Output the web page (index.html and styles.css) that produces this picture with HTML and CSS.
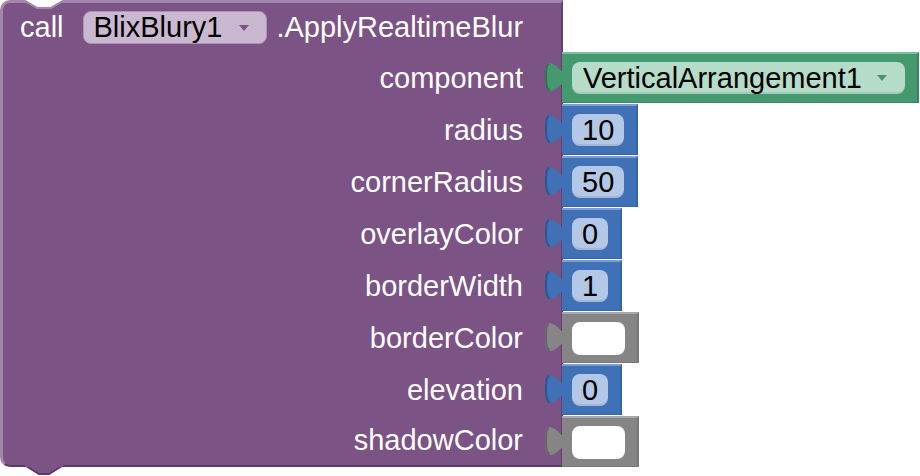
FILE: index.html
```html
<!DOCTYPE html>
<html>
<head>
  <title>ApplyRealtimeBlur block</title>
  <link rel="stylesheet" href="styles.css">
</head>
<body>
  <div class="block">
    <!-- top notch and bottom tab of the statement block -->
    <svg class="notch" width="40" height="9" viewBox="0 0 40 9">
      <path d="M0,0 L12,7 L26,7 L38,0 Z" fill="#fff"/>
      <path d="M0,1 L12,8 L26,8 L38,1" fill="none" stroke="#a485ad" stroke-width="2"/>
    </svg>

    <div class="row">
      <div class="body head">
        <span>call</span>
        <span class="dropdown">BlixBlury1<svg class="arrow" width="12" height="8" viewBox="0 0 12 8"><path d="M1,1 L11,1 L6,7 Z" fill="#7b5385"/></svg></span>
        <span>.ApplyRealtimeBlur</span>
      </div>
    </div>

    <div class="row">
      <div class="body">component</div>
      <div class="plug green">
        <svg class="tab" width="18" height="28" viewBox="0 0 18 28"><path d="M18,8 C14,8 13,1 4,0 C1,0 0,6 0,14 C0,22 1,28 5,28 C13,27 14,21 18,21 Z"/><path class="edge" d="M4,1 C2,1 1,6 1,14 C1,22 2,27 5,27"/></svg>
        <span class="field">VerticalArrangement1<svg class="arrow" width="12" height="8" viewBox="0 0 12 8"><path d="M1,1 L11,1 L6,7 Z" fill="#45996f"/></svg></span>
      </div>
    </div>

    <div class="row">
      <div class="body">radius</div>
      <div class="plug blue">
        <svg class="tab" width="18" height="28" viewBox="0 0 18 28"><path d="M18,8 C14,8 13,1 4,0 C1,0 0,6 0,14 C0,22 1,28 5,28 C13,27 14,21 18,21 Z"/><path class="edge" d="M4,1 C2,1 1,6 1,14 C1,22 2,27 5,27"/></svg>
        <span class="field">10</span>
      </div>
    </div>

    <div class="row">
      <div class="body">cornerRadius</div>
      <div class="plug blue">
        <svg class="tab" width="18" height="28" viewBox="0 0 18 28"><path d="M18,8 C14,8 13,1 4,0 C1,0 0,6 0,14 C0,22 1,28 5,28 C13,27 14,21 18,21 Z"/><path class="edge" d="M4,1 C2,1 1,6 1,14 C1,22 2,27 5,27"/></svg>
        <span class="field">50</span>
      </div>
    </div>

    <div class="row">
      <div class="body">overlayColor</div>
      <div class="plug blue">
        <svg class="tab" width="18" height="28" viewBox="0 0 18 28"><path d="M18,8 C14,8 13,1 4,0 C1,0 0,6 0,14 C0,22 1,28 5,28 C13,27 14,21 18,21 Z"/><path class="edge" d="M4,1 C2,1 1,6 1,14 C1,22 2,27 5,27"/></svg>
        <span class="field">0</span>
      </div>
    </div>

    <div class="row">
      <div class="body">borderWidth</div>
      <div class="plug blue">
        <svg class="tab" width="18" height="28" viewBox="0 0 18 28"><path d="M18,8 C14,8 13,1 4,0 C1,0 0,6 0,14 C0,22 1,28 5,28 C13,27 14,21 18,21 Z"/><path class="edge" d="M4,1 C2,1 1,6 1,14 C1,22 2,27 5,27"/></svg>
        <span class="field">1</span>
      </div>
    </div>

    <div class="row">
      <div class="body">borderColor</div>
      <div class="plug gray">
        <svg class="tab" width="18" height="28" viewBox="0 0 18 28"><path d="M18,8 C14,8 13,1 4,0 C1,0 0,6 0,14 C0,22 1,28 5,28 C13,27 14,21 18,21 Z"/><path class="edge" d="M4,1 C2,1 1,6 1,14 C1,22 2,27 5,27"/></svg>
        <span class="swatch"></span>
      </div>
    </div>

    <div class="row">
      <div class="body">elevation</div>
      <div class="plug blue">
        <svg class="tab" width="18" height="28" viewBox="0 0 18 28"><path d="M18,8 C14,8 13,1 4,0 C1,0 0,6 0,14 C0,22 1,28 5,28 C13,27 14,21 18,21 Z"/><path class="edge" d="M4,1 C2,1 1,6 1,14 C1,22 2,27 5,27"/></svg>
        <span class="field">0</span>
      </div>
    </div>

    <div class="row last">
      <div class="body">shadowColor</div>
      <div class="plug gray">
        <svg class="tab" width="18" height="28" viewBox="0 0 18 28"><path d="M18,8 C14,8 13,1 4,0 C1,0 0,6 0,14 C0,22 1,28 5,28 C13,27 14,21 18,21 Z"/><path class="edge" d="M4,1 C2,1 1,6 1,14 C1,22 2,27 5,27"/></svg>
        <span class="swatch"></span>
      </div>
    </div>

    <svg class="next" width="40" height="11" viewBox="0 0 40 11">
      <path d="M1,1 L14,9 L24,9 L37,1" fill="#7b5385" stroke="#5b3a64" stroke-width="2"/>
      <rect x="0" y="0" width="38" height="2" fill="#7b5385"/>
    </svg>
  </div>
</body>
</html>
```

FILE: styles.css
```css
body {
  margin: 0;
  background-color: #fff;
  font-family: "Liberation Sans", Arial, sans-serif;
  font-size: 29px;
}
.block {
  position: relative;
  width: 920px;
  padding-bottom: 9px;
}
.row {
  display: flex;
  height: 52px;
}
.body {
  width: 563px;
  flex: none;
  box-sizing: border-box;
  display: flex;
  align-items: center;
  justify-content: flex-end;
  padding-right: 38px;
  background-color: #7b5385;
  color: #fff;
  border-left: 3px solid #a485ad;
  border-right: 2px solid #64416f;
}
.head {
  justify-content: flex-start;
  padding-left: 17px;
  border-top: 3px solid #a485ad;
  border-top-left-radius: 10px;
}
.row.last {
  height: 51px;
}
.last .body {
  border-bottom: 2px solid #5b3a64;
  border-bottom-left-radius: 10px;
}
.dropdown {
  display: flex;
  align-items: center;
  height: 33px;
  box-sizing: border-box;
  margin: 0 9px 0 19px;
  padding: 0 16px 0 10px;
  background-color: #cab8d1;
  color: #000;
  border: 1px solid #ad94b5;
  border-radius: 8px;
}
.arrow {
  margin-left: 16px;
}
.plug {
  position: relative;
  display: flex;
  align-items: center;
  height: 51px;
  box-sizing: border-box;
  margin-left: -1px;
  padding: 0 12px 0 10px;
  border-top: 2px solid;
  border-right: 2px solid;
  border-bottom: 1px solid;
}
.tab {
  position: absolute;
  left: -17px;
  top: 9px;
}
.edge {
  fill: none;
  stroke-width: 2;
}
.field {
  display: flex;
  align-items: center;
  height: 32px;
  padding: 0 10px;
  border-radius: 8px;
  color: #000;
  box-shadow: inset 0 -2px 0 rgba(0,0,0,0.08);
}
.green {
  background-color: #45996f;
  border-color: #7dbf9c #3a8560 #3a8560;
}
.green .tab {
  fill: #45996f;
}
.green .edge {
  stroke: #2f7350;
}
.green .field {
  background-color: #b5dcc8;
  padding: 0 17px 0 11px;
}
.green .arrow {
  margin-left: 14px;
}
.blue {
  background-color: #4070b6;
  border-color: #7c9dd3 #3863a4 #3863a4;
}
.blue .tab {
  fill: #4070b6;
}
.blue .edge {
  stroke: #2d5590;
}
.blue .field {
  background-color: #b3c7e6;
}
.gray {
  background-color: #858585;
  border-color: #a8a8a8 #777 #777;
}
.gray .tab {
  fill: #858585;
}
.gray .edge {
  stroke: #666;
}
.swatch {
  width: 53px;
  height: 33px;
  border-radius: 8px;
  background-color: #fff;
}
.notch {
  position: absolute;
  left: 25px;
  top: 0;
}
.next {
  position: absolute;
  left: 25px;
  top: 465px;
}
```
